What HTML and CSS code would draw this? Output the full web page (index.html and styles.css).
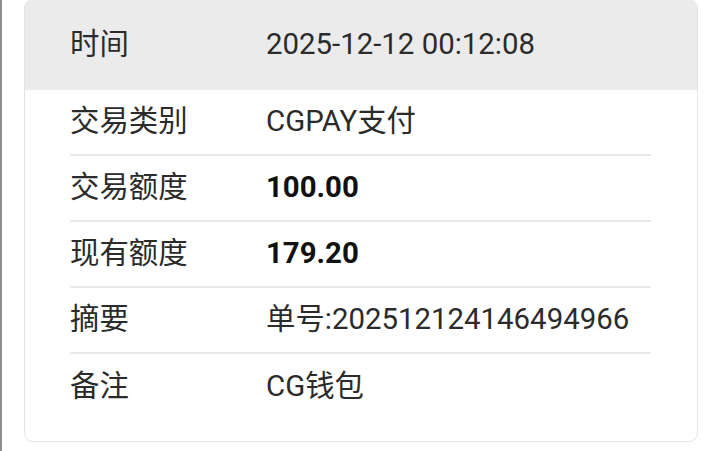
FILE: index.html
```html
<!DOCTYPE html>
<html lang="zh-CN">
<head>
<meta charset="utf-8">
<link rel="stylesheet" href="styles.css">
</head>
<body>
<div class="page">
  <div class="card">
    <div class="row head">
      <div class="label">时间</div>
      <div class="value">2025-12-12 00:12:08</div>
    </div>
    <div class="rows">
      <div class="row">
        <div class="label">交易类别</div>
        <div class="value">CGPAY支付</div>
      </div>
      <div class="row">
        <div class="label">交易额度</div>
        <div class="value bold">100.00</div>
      </div>
      <div class="row">
        <div class="label">现有额度</div>
        <div class="value bold">179.20</div>
      </div>
      <div class="row">
        <div class="label">摘要</div>
        <div class="value">单号:202512124146494966</div>
      </div>
      <div class="row last">
        <div class="label">备注</div>
        <div class="value">CG钱包</div>
      </div>
    </div>
  </div>
</div>
</body>
</html>
```
FILE: styles.css
```css
html, body {
  margin: 0;
  padding: 0;
  background: #ffffff;
}
body {
  font-family: Roboto, "Noto Sans CJK SC", sans-serif;
  color: #2b2b2b;
  font-size: 29.4px;
  line-height: 1.2;
}
.page {
  width: 720px;
  height: 451px;
  box-sizing: border-box;
  border-left: 2px solid #8f8f8f;
  padding: 0 22px 0 22px;
  overflow: hidden;
}
.card {
  width: 674px;
  height: 443px;
  box-sizing: border-box;
  border: 1px solid #e3e3e3;
  border-radius: 9px;
  overflow: hidden;
  margin-top: -1px;
}
.row {
  display: flex;
  align-items: center;
  height: 66px;
  border-bottom: 2px solid #e8e8e8;
  box-sizing: border-box;
}
.row.last {
  border-bottom: none;
}
.head {
  height: 90px;
  background: #ebebeb;
  border-bottom: none;
  padding: 0 45px;
}
.rows {
  padding: 0 46px 0 45px;
}
.label {
  width: 196px;
  flex-shrink: 0;
}
.value.bold {
  font-weight: 700;
  color: #111111;
}
```
